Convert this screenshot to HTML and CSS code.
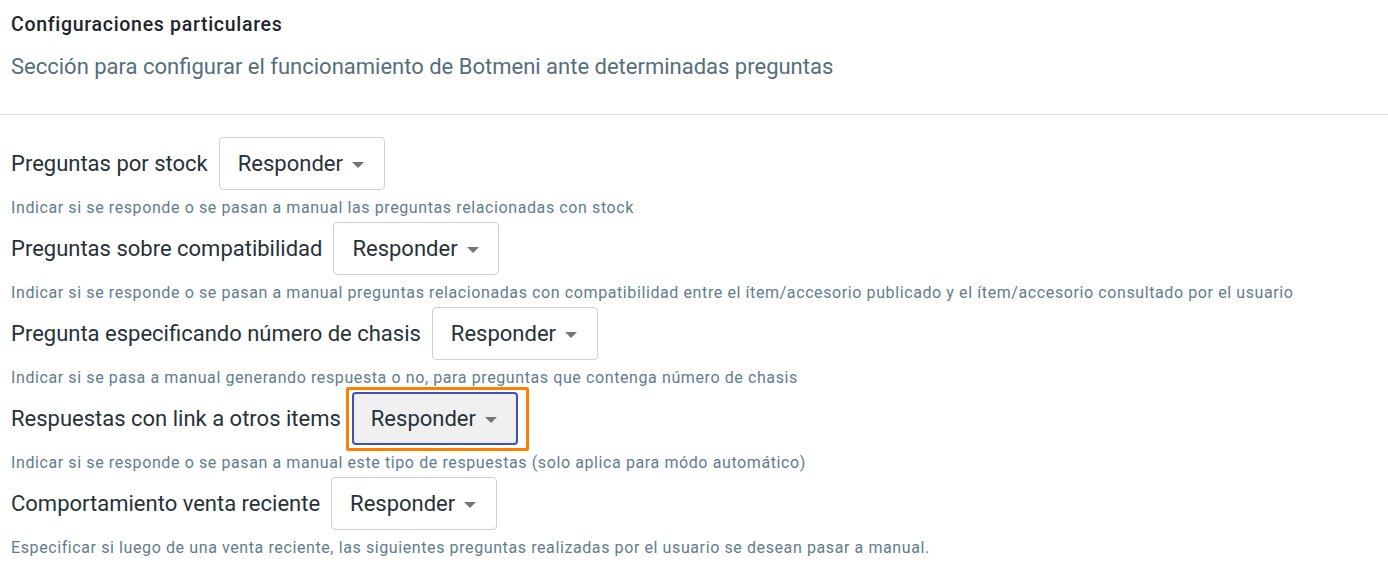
FILE: index.html
```html
<!DOCTYPE html>
<html lang="es">
<head>
<meta charset="utf-8">
<title>Configuraciones particulares</title>
<link rel="stylesheet" href="styles.css">
</head>
<body>
<header class="head">
  <h2 class="title">Configuraciones particulares</h2>
  <p class="subtitle">Sección para configurar el funcionamiento de Botmeni ante determinadas preguntas</p>
</header>
<hr class="divider">
<main class="list">
  <div class="item">
    <div class="row">
      <span class="label">Preguntas por stock</span>
      <button class="select">Responder <span class="caret"></span></button>
    </div>
    <p class="help">Indicar si se responde o se pasan a manual las preguntas relacionadas con stock</p>
  </div>
  <div class="item">
    <div class="row">
      <span class="label">Preguntas sobre compatibilidad</span>
      <button class="select">Responder <span class="caret"></span></button>
    </div>
    <p class="help">Indicar si se responde o se pasan a manual preguntas relacionadas con compatibilidad entre el ítem/accesorio publicado y el ítem/accesorio consultado por el usuario</p>
  </div>
  <div class="item">
    <div class="row">
      <span class="label">Pregunta especificando número de chasis</span>
      <button class="select">Responder <span class="caret"></span></button>
    </div>
    <p class="help">Indicar si se pasa a manual generando respuesta o no, para preguntas que contenga número de chasis</p>
  </div>
  <div class="item">
    <div class="row">
      <span class="label">Respuestas con link a otros items</span>
      <span class="highlight"><button class="select select-active">Responder <span class="caret"></span></button></span>
    </div>
    <p class="help">Indicar si se responde o se pasan a manual este tipo de respuestas (solo aplica para módo automático)</p>
  </div>
  <div class="item">
    <div class="row">
      <span class="label">Comportamiento venta reciente</span>
      <button class="select">Responder <span class="caret"></span></button>
    </div>
    <p class="help">Especificar si luego de una venta reciente, las siguientes preguntas realizadas por el usuario se desean pasar a manual.</p>
  </div>
</main>
</body>
</html>
```

FILE: styles.css
```css
* { box-sizing: border-box; }
html, body {
  margin: 0;
  padding: 0;
  background: #ffffff;
  font-family: Roboto, "Liberation Sans", Arial, sans-serif;
  color: #263238;
}
.head {
  padding: 12px 11px 0 11px;
}
.title {
  margin: 0;
  font-size: 19.5px;
  font-weight: 500;
  letter-spacing: 0.7px;
  line-height: 26px;
  color: #212529;
}
.subtitle {
  margin: 16px 0 0 0;
  font-size: 22px;
  line-height: 26px;
  color: #546e7a;
}
.divider {
  margin: 34px 0 0 0;
  border: 0;
  border-top: 1px solid #dddddd;
  height: 0;
}
.list {
  padding: 22px 11px 0 11px;
  display: flex;
  flex-direction: column;
}
.item {
  display: flex;
  flex-direction: column;
  height: 85px;
}
.row {
  display: flex;
  align-items: center;
  gap: 11px;
  height: 53px;
}
.label {
  font-size: 22px;
  color: #263238;
}
.select {
  display: inline-flex;
  align-items: center;
  height: 53px;
  width: 166px;
  padding: 0 18px 0 18px;
  border: 1px solid #d0d0d0;
  border-radius: 4px;
  background: #ffffff;
  font-family: inherit;
  font-size: 22px;
  color: #263238;
  gap: 9px;
  cursor: pointer;
}
.caret {
  width: 0;
  height: 0;
  border-left: 6px solid transparent;
  border-right: 6px solid transparent;
  border-top: 6px solid #757575;
  margin-top: 2px;
}
.highlight {
  display: inline-flex;
  padding: 2px 8px 3px 3px;
  border: 3px solid #ff8000;
  border-radius: 2px;
  margin: 1px 0 0 -6px;
}
.select-active {
  background: #f0f0f0;
  border: 2px solid #3f51b5;
  padding-left: 17px;
}
.help {
  margin: 9px 0 0 0;
  font-size: 16px;
  letter-spacing: 0.6px;
  line-height: 18px;
  color: #5f7d8c;
}
```
